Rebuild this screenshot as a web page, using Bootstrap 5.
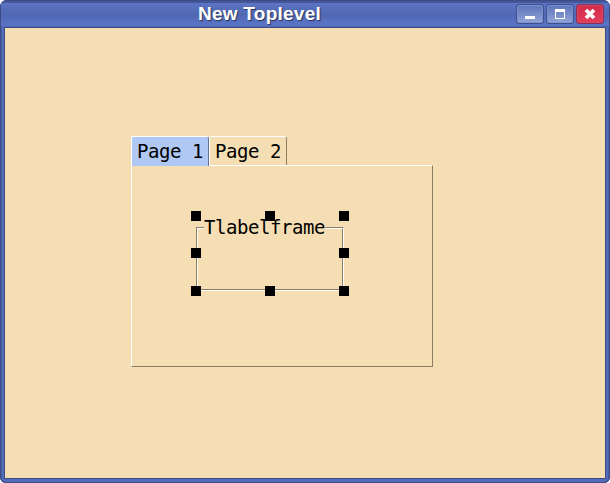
<!DOCTYPE html>
<html lang="en">
<head>
<meta charset="utf-8">
<meta name="viewport" content="width=device-width, initial-scale=1">
<title>New Toplevel</title>
<link href="https://cdn.jsdelivr.net/npm/bootstrap@5.3.0/dist/css/bootstrap.min.css" rel="stylesheet">
<style>
body{background:#fff}
.win{height:483px;padding:0 5px 5px;border-radius:7px 7px 6px 6px;background:#546bb7;box-shadow:inset 0 0 0 1px #3d4c88,inset 2px 0 0 #4a5ea3,inset -2px 0 0 #4a5ea3}
.titlebar{height:27px;margin:0 -4px;background:linear-gradient(#3d4c88 0 1px,#465799 1px 3px,#5c75c4 3px,#566dba 9px,#5067b2 15px,#5b75c6 25px,#4f66b0 27px);border-radius:6px 6px 0 0;padding:0 5px 0 0}
.caption{font:bold 19px/27px "Liberation Sans",Arial,sans-serif;color:#fff;text-shadow:1px 1px 1px #28345f;letter-spacing:.25px;padding-left:2px}
.winbtn{width:28px;height:20px;border:1px solid #3e4e8c;border-radius:3px;background:linear-gradient(#5c74bd,#92a3d6);box-shadow:inset 0 0 0 1px #7f92cf}
.winbtn.closer{background:linear-gradient(#d22c48,#e43f5b);border-color:#84305a;box-shadow:inset 0 0 0 1px #d94660}
.winbtn svg{display:block}
.client{background:#f5deb3;height:452px;border:1px solid #3d4c88;margin:0 -1px;padding:108px 0 0 126px;font:19px/26px "DejaVu Sans Mono",monospace;letter-spacing:-.438px;color:#000}
.tabs{height:29px}
.pagetab{width:78px;height:29px;border:solid #8b7d62;border-width:0 1px 0 0;border-left:1px solid #fff;border-top:1px solid #fff;border-radius:2px 3px 0 0;padding:1px 0 0 5px;white-space:nowrap}
.pagetab.current{background:#b0c8f4;height:30px;border-right-color:#65708a;position:relative}
.pane{width:302px;height:202px;border:1px solid #fff;border-right-color:#8b7d62;border-bottom-color:#8b7d62;padding:61px 0 0 64px}
.groupbox{width:148px;height:64px;border:1px solid #8b7d62;border-right-color:#fff;border-bottom-color:#fff;position:relative}
.groupbox::before{content:"";display:block;height:62px;border:1px solid #fff;border-right-color:#8b7d62;border-bottom-color:#8b7d62}
.legendtext{position:absolute;left:7px;top:-14px;width:121px;background:#f5deb3;white-space:nowrap}
.handle{position:absolute;width:10px;height:10px;background:#000}
.h-l{left:-6px}.h-c{left:68px}.h-r{left:142px}
.h-t{top:-17px}.h-m{top:20px}.h-b{top:58px}
</style>
</head>
<body class="m-0 overflow-hidden">
<div class="win">
  <header class="titlebar d-flex align-items-center">
    <div class="caption flex-grow-1 text-center">New Toplevel</div>
    <div class="d-flex" style="gap:2px">
      <div class="winbtn"><svg width="26" height="18"><path d="M8 11h10v3H8z" fill="#fff"/></svg></div>
      <div class="winbtn"><svg width="26" height="18"><path d="M8 4h10v10H8zM9 7v6h8V7z" fill="#fff" fill-rule="evenodd"/></svg></div>
      <div class="winbtn closer"><svg width="26" height="18"><path d="M9 5l8 8M17 5l-8 8" stroke="#fff" stroke-width="3.8" fill="none"/></svg></div>
    </div>
  </header>
  <main class="client">
    <div class="tabs d-flex">
      <div class="pagetab current">Page 1</div>
      <div class="pagetab">Page 2</div>
    </div>
    <section class="pane">
      <div class="groupbox">
        <div class="legendtext">Tlabelframe</div>
        <i class="handle h-l h-t"></i><i class="handle h-c h-t"></i><i class="handle h-r h-t"></i>
        <i class="handle h-l h-m"></i><i class="handle h-r h-m"></i>
        <i class="handle h-l h-b"></i><i class="handle h-c h-b"></i><i class="handle h-r h-b"></i>
      </div>
    </section>
  </main>
</div>
<script src="https://cdn.jsdelivr.net/npm/bootstrap@5.3.0/dist/js/bootstrap.bundle.min.js"></script>
</body>
</html>
